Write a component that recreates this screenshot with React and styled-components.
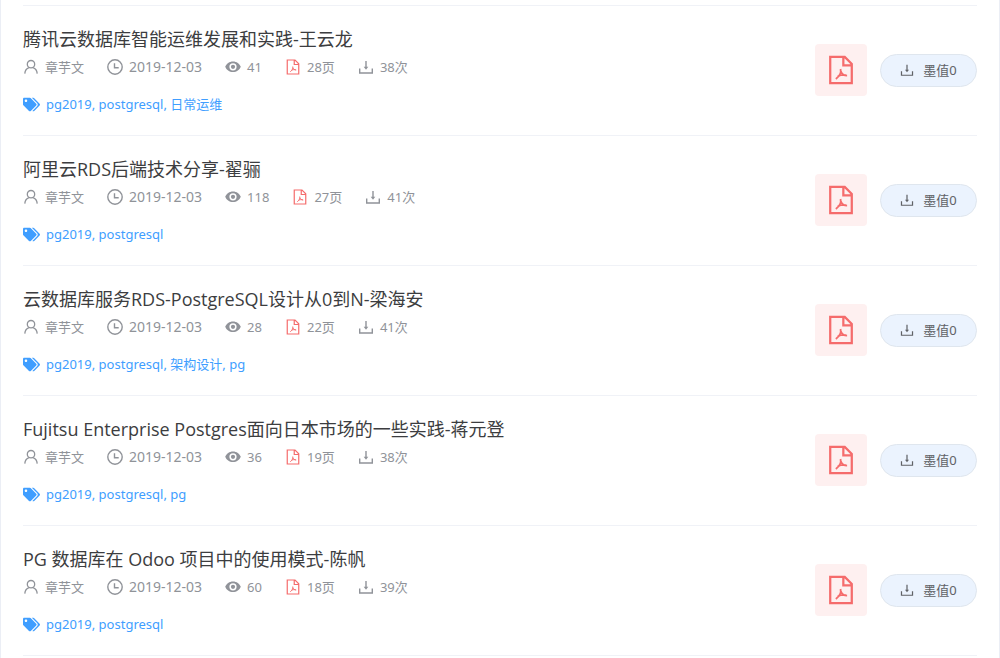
import React from "react";
import styled, { createGlobalStyle } from "styled-components";
import { FaTags } from "react-icons/fa";

const Global = createGlobalStyle`
  * { box-sizing: border-box; }
  body {
    margin: 0;
    background: #fff;
    font-family: "Noto Sans", "Noto Sans CJK SC", sans-serif;
    font-size: 13px;
    line-height: 20px;
    color: #909399;
  }
`;

const Panel = styled.main`
  min-height: 100vh;
  padding: 5px 22px 0;
  border: solid #ebeef5;
  border-width: 0 1px;
`;

const List = styled.ul`
  margin: 0;
  padding: 0;
  list-style: none;
  border-bottom: 1px solid #f0f2f7;
`;

const Row = styled.li`
  display: flex;
  align-items: center;
  gap: 13px;
  padding: 20px 0 21px;
  border-top: 1px solid #f0f2f7;
`;

const Details = styled.div`
  flex: 1;
  min-width: 0;
`;

const Title = styled.h2`
  margin: 0 0 5px;
  font-family: "Open Sans", "Noto Sans CJK SC", sans-serif;
  font-size: 18px;
  font-weight: 400;
  line-height: 26px;
  color: #3c3d40;
`;

const Meta = styled.div`
  display: flex;
  gap: 23px;
`;

const MetaItem = styled.span`
  display: flex;
  align-items: center;
  gap: 6px;
  font-size: ${(p) => (p.$large ? 14 : 13)}px;
`;

const Tags = styled.div`
  display: flex;
  align-items: center;
  gap: 6px;
  margin-top: 17px;
  color: #409eff;
`;

const TagLink = styled.a`
  color: inherit;
  text-decoration: none;
`;

const FileTile = styled.div`
  display: flex;
  align-items: center;
  justify-content: center;
  width: 52px;
  height: 52px;
  border-radius: 4px;
  background: #fef0f0;
`;

const DownloadButton = styled.button`
  display: flex;
  align-items: center;
  justify-content: center;
  gap: 9px;
  width: 97px;
  height: 33px;
  padding: 0;
  border: 1px solid #dfe6ee;
  border-radius: 17px;
  background: #ebf3fe;
  color: #606266;
  font: inherit;
  cursor: pointer;
`;

const Icon = styled.svg`
  flex: none;
  width: ${(p) => p.$size || 16}px;
  height: ${(p) => p.$size || 16}px;
  fill: none;
  stroke: ${(p) => p.$color || "currentColor"};
`;

const UserIcon = () => (
  <Icon viewBox="0 0 16 16" strokeWidth="1.3" aria-hidden="true">
    <circle cx="8" cy="5.2" r="3.7" />
    <path d="M1.8 14.6c.2-3 1.8-5.2 4.3-6M14.2 14.6c-.2-3-1.8-5.2-4.3-6" />
  </Icon>
);

const ClockIcon = () => (
  <Icon viewBox="0 0 16 16" strokeWidth="1.4" aria-hidden="true">
    <circle cx="8" cy="8" r="7.2" />
    <path d="M7.5 4.2v4.5h4.2" />
  </Icon>
);

const EyeIcon = () => (
  <Icon viewBox="0 0 16 16" aria-hidden="true">
    <path
      d="M8 2.5C4.4 2.5 1.4 4.7.2 7.8 1.4 10.9 4.4 13.1 8 13.1s6.6-2.2 7.8-5.3C14.6 4.7 11.6 2.5 8 2.5zm0 8.9a3.6 3.6 0 1 1 0-7.2 3.6 3.6 0 0 1 0 7.2zm0-1.5a2.1 2.1 0 1 0 0-4.2 2.1 2.1 0 0 0 0 4.2z"
      fill="currentColor"
      stroke="none"
    />
  </Icon>
);

const PdfIcon = ({ size, weight }) => (
  <Icon viewBox="0 0 32 32" $size={size} $color="#f56c6c" strokeWidth={weight} aria-hidden="true">
    <path d="M4.5 2h15.5l7.5 7.5v20.5h-23zM18.5 2v9h9" />
    <path
      d="M15.5 15c1 4-1 7.5-5 10.5M15.8 17.5c1 2.8 3.2 4.5 6.7 4.5M12.5 22.8c3-1.5 6-2 9-1.3"
      strokeWidth={weight * 0.8}
    />
  </Icon>
);

const DownloadIcon = ({ size }) => (
  <Icon viewBox="0 0 16 16" $size={size} strokeWidth="1.4" aria-hidden="true">
    <path d="M8 2v7M1.7 9.5v4.5h12.6v-4.5" />
    <path d="M5.7 7.7h4.6l-2.3 3z" fill="currentColor" stroke="none" />
  </Icon>
);

const documents = [
  { title: "腾讯云数据库智能运维发展和实践-王云龙", views: 41, pages: 28, downloads: 38, tags: ["pg2019", "postgresql", "日常运维"] },
  { title: "阿里云RDS后端技术分享-翟骊", views: 118, pages: 27, downloads: 41, tags: ["pg2019", "postgresql"] },
  { title: "云数据库服务RDS-PostgreSQL设计从0到N-梁海安", views: 28, pages: 22, downloads: 41, tags: ["pg2019", "postgresql", "架构设计", "pg"] },
  { title: "Fujitsu Enterprise Postgres面向日本市场的一些实践-蒋元登", views: 36, pages: 19, downloads: 38, tags: ["pg2019", "postgresql", "pg"] },
  { title: "PG 数据库在 Odoo 项目中的使用模式-陈帆", views: 60, pages: 18, downloads: 39, tags: ["pg2019", "postgresql"] },
];

const DocumentRow = ({ doc }) => (
  <Row>
    <Details>
      <Title>{doc.title}</Title>
      <Meta>
        <MetaItem><UserIcon />章芋文</MetaItem>
        <MetaItem $large><ClockIcon />2019-12-03</MetaItem>
        <MetaItem><EyeIcon />{doc.views}</MetaItem>
        <MetaItem><PdfIcon size={16} weight={2.4} />{doc.pages}页</MetaItem>
        <MetaItem><DownloadIcon />{doc.downloads}次</MetaItem>
      </Meta>
      <Tags>
        <FaTags size={17} aria-hidden="true" />
        <span>
          {doc.tags.map((tag, i) => (
            <React.Fragment key={tag}>
              {i > 0 && ", "}
              <TagLink href="#">{tag}</TagLink>
            </React.Fragment>
          ))}
        </span>
      </Tags>
    </Details>
    <FileTile><PdfIcon size={30} weight={2.4} /></FileTile>
    <DownloadButton type="button"><DownloadIcon size={14} />墨值0</DownloadButton>
  </Row>
);

export default function App() {
  return (
    <>
      <Global />
      <Panel>
        <List>
          {documents.map((doc) => <DocumentRow key={doc.title} doc={doc} />)}
        </List>
      </Panel>
    </>
  );
}
